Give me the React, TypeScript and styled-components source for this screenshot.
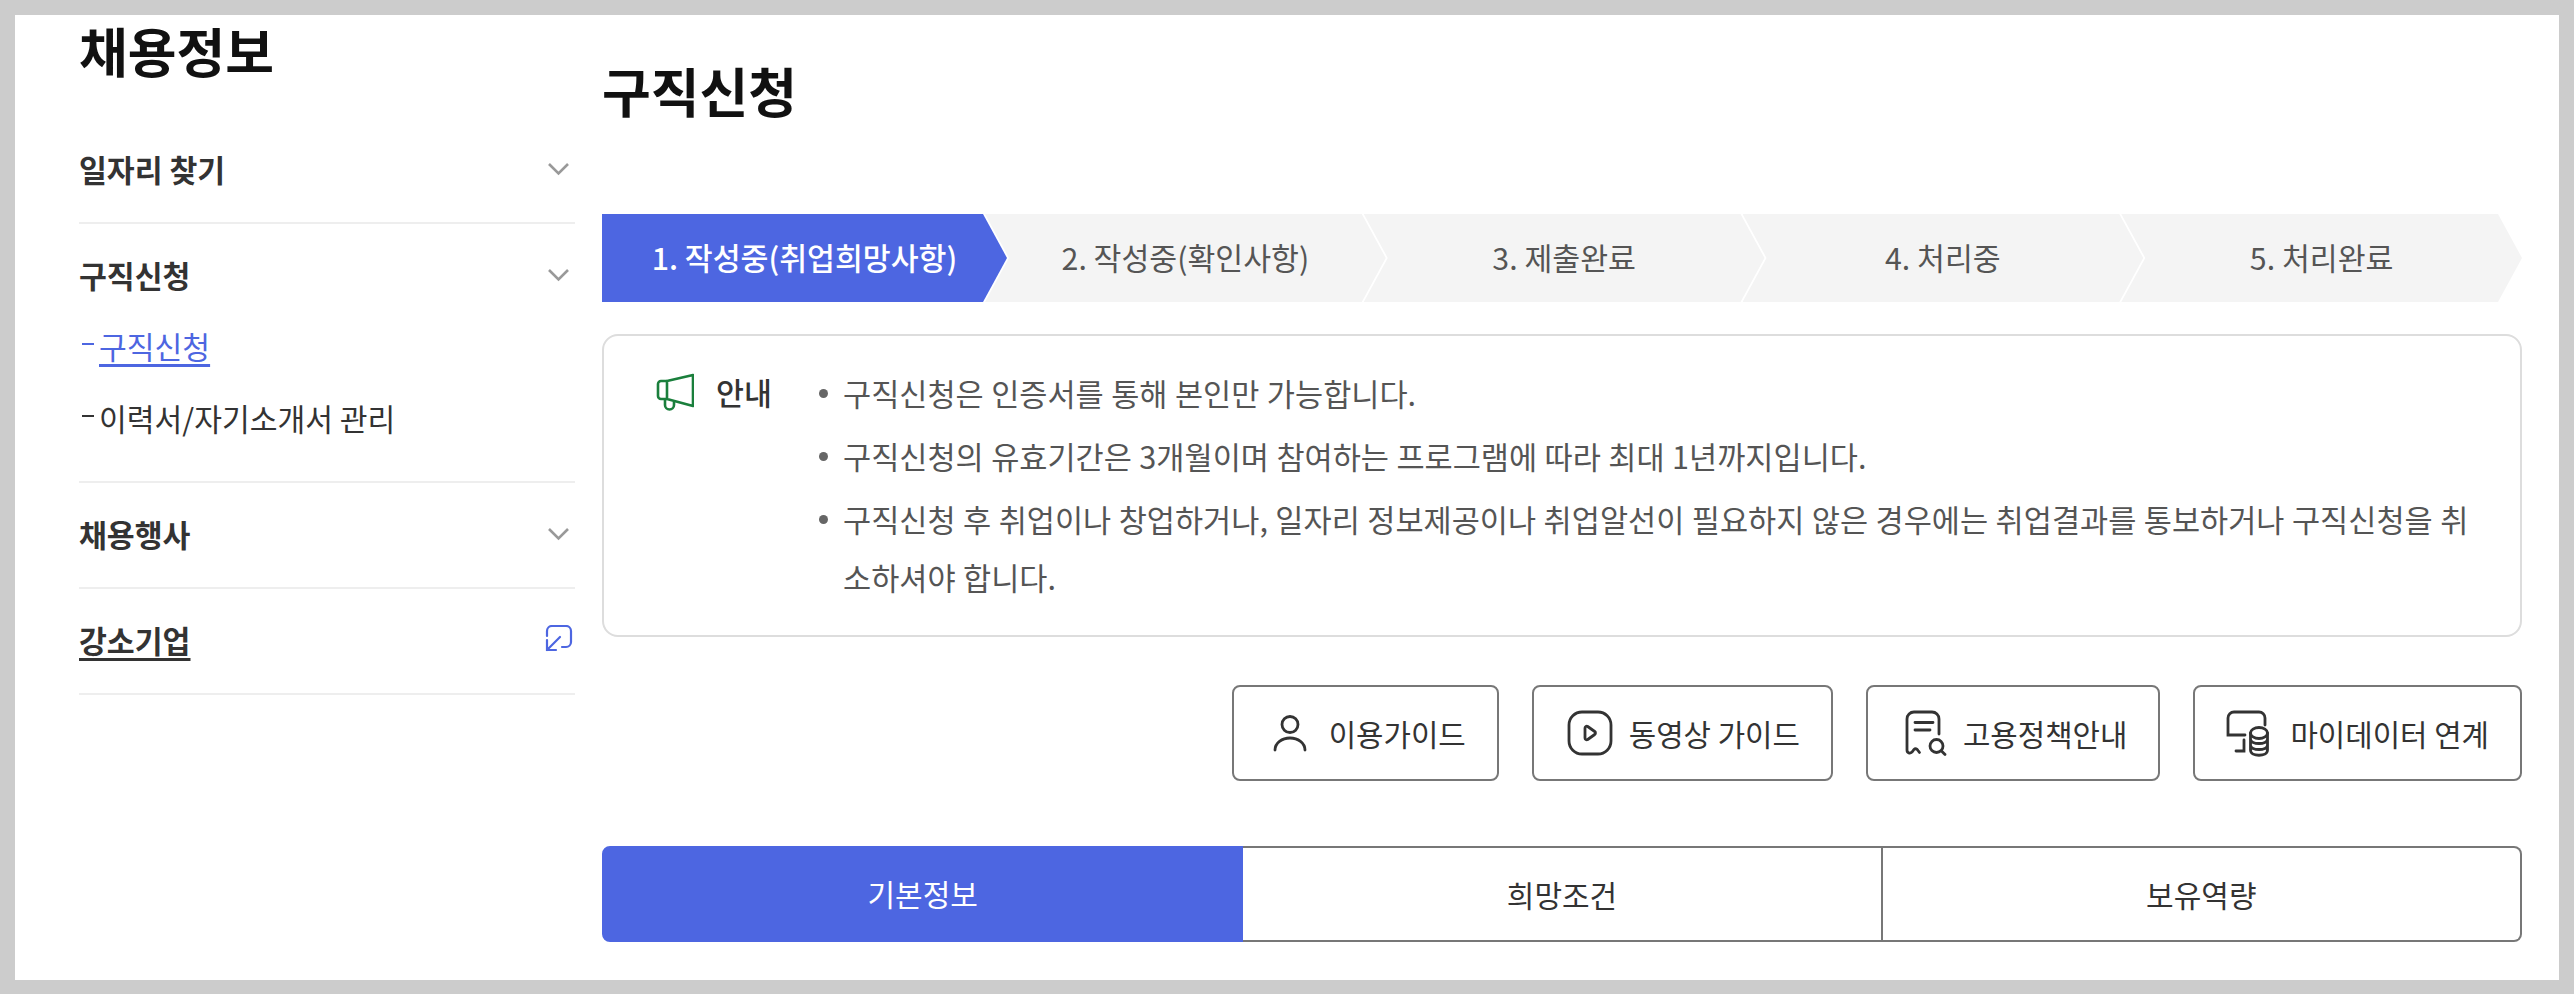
import React from "react";
import styled, { createGlobalStyle } from "styled-components";

const FONT = `"Noto Sans CJK KR", "Noto Sans", sans-serif`;
const BLUE = "#4d66e1";

const GlobalStyle = createGlobalStyle`
  html, body {
    margin: 0;
    padding: 0;
    background: #cccccc;
  }
  body {
    font-family: ${FONT};
  }
  * {
    box-sizing: border-box;
  }
`;

const Frame = styled.div`
  margin: 15px;
  height: 965px;
  background: #fff;
  display: flex;
  gap: 27px;
  padding: 0 37px 0 64px;
`;

const Sidebar = styled.aside`
  width: 496px;
  flex-shrink: 0;
`;

const SideTitle = styled.h2`
  margin: 0;
  padding-top: 4px;
  height: 103px;
  font-size: 53px;
  font-weight: 600;
  line-height: 62px;
  color: #111;
`;

const NavSection = styled.div`
  padding: 25px 0 27px;
  border-bottom: 2px solid #eeeeee;
`;

const NavHeader = styled.div`
  height: 52px;
  display: flex;
  align-items: center;
  justify-content: space-between;
`;

const NavLabel = styled.span<{ $link?: boolean }>`
  font-size: 30.3px;
  font-weight: 600;
  color: #333;
  text-decoration: ${(p) => (p.$link ? "underline" : "none")};
  text-underline-offset: 5px;
`;

const SubList = styled.ul`
  list-style: none;
  margin: 9px 0 0;
  padding: 0;
`;

const SubItem = styled.li<{ $active?: boolean }>`
  height: 72px;
  display: flex;
  align-items: center;
  font-size: 30.2px;
  color: ${(p) => (p.$active ? BLUE : "#333")};
  &::before {
    content: "";
    width: 12px;
    height: 2px;
    margin: 0 5px 4px 3px;
    background: currentColor;
  }
  a {
    color: inherit;
    text-decoration: underline;
    text-underline-offset: 5px;
  }
`;

const Main = styled.main`
  flex: 1;
  min-width: 0;
`;

const PageTitle = styled.h1`
  margin: 0;
  padding-top: 44px;
  height: 199px;
  font-size: 53px;
  font-weight: 600;
  line-height: 62px;
  color: #111;
`;

const Steps = styled.ol`
  list-style: none;
  margin: 0;
  padding: 0;
  display: flex;
  height: 88px;
`;

const Step = styled.li<{ $active?: boolean }>`
  flex: ${(p) => (p.$active ? "0 0 405px" : "1")};
  margin-left: ${(p) => (p.$active ? "0" : "-22px")};
  padding-bottom: 2px;
  display: flex;
  align-items: center;
  justify-content: center;
  background: ${(p) => (p.$active ? BLUE : "#f4f4f4")};
  color: ${(p) => (p.$active ? "#fff" : "#555")};
  font-size: 30.3px;
  font-weight: ${(p) => (p.$active ? 500 : 400)};
  clip-path: ${(p) =>
    p.$active
      ? "polygon(0 0, calc(100% - 24px) 0, 100% 50%, calc(100% - 24px) 100%, 0 100%)"
      : "polygon(0 0, calc(100% - 24px) 0, 100% 50%, calc(100% - 24px) 100%, 0 100%, 24px 50%)"};
`;

const Notice = styled.section`
  margin-top: 32px;
  height: 303px;
  border: 2px solid #dddddd;
  border-radius: 16px;
  display: flex;
  padding: 28px 50px 0 52px;
`;

const NoticeHead = styled.div`
  flex: 0 0 158px;
  height: 60px;
  margin-top: -2px;
  display: flex;
  align-items: center;
  gap: 22px;
  font-size: 30.4px;
  font-weight: 500;
  color: #333;
`;

const NoticeList = styled.ul`
  list-style: none;
  margin: 0;
  padding: 0;
  flex: 1;
`;

const NoticeItem = styled.li`
  position: relative;
  padding-left: 29px;
  margin-bottom: 5px;
  font-size: 30.6px;
  word-spacing: 0.6px;
  line-height: 58px;
  color: #555;
  &::before {
    content: "";
    position: absolute;
    left: 5px;
    top: 25px;
    width: 9px;
    height: 9px;
    border-radius: 50%;
    background: #666;
  }
`;

const GuideRow = styled.div`
  margin-top: 48px;
  display: flex;
  justify-content: flex-end;
  gap: 33px;
`;

const GuideButton = styled.button`
  height: 96px;
  padding: 0 31px 0 30px;
  display: flex;
  align-items: center;
  gap: 13px;
  background: #fff;
  border: 2px solid #777;
  border-radius: 8px;
  font-family: ${FONT};
  font-size: 29.8px;
  color: #333;
`;

const Tabs = styled.div`
  margin-top: 65px;
  display: flex;
  height: 96px;
`;

const Tab = styled.div<{ $active?: boolean }>`
  flex: 1;
  padding-bottom: ${(p) => (p.$active ? "3px" : "0")};
  display: flex;
  align-items: center;
  justify-content: center;
  font-size: 30px;
  color: ${(p) => (p.$active ? "#fff" : "#333")};
  background: ${(p) => (p.$active ? BLUE : "#fff")};
  border: 2px solid ${(p) => (p.$active ? BLUE : "#777")};
  border-left-width: 0;
  &:first-child {
    border-left-width: 2px;
    border-radius: 8px 0 0 8px;
  }
  &:last-child {
    border-radius: 0 8px 8px 0;
  }
`;

const Chevron = () => (
  <svg width="32" height="14" viewBox="0 0 32 14" fill="none">
    <path d="M6 2l9.5 9.5L25 2" stroke="#999" strokeWidth="2.6" />
  </svg>
);

const ExternalIcon = () => (
  <svg width="30" height="30" viewBox="0 0 30 30" fill="none" stroke={BLUE} strokeWidth="2.2" strokeLinecap="round">
    <path d="M2 11V6a5 5 0 0 1 5-5h14a5 5 0 0 1 5 5v11a5 5 0 0 1-5 5h-4" />
    <path d="M15 12L2 25M2 15v10h9" />
  </svg>
);

const MegaphoneIcon = () => (
  <svg width="38" height="38" viewBox="0 0 38 38" fill="none" stroke="#1a7f3c" strokeWidth="2.6" strokeLinejoin="round">
    <path d="M11 8L37 2v31l-26-7z" />
    <path d="M11 8H5a3 3 0 0 0-3 3v12a3 3 0 0 0 3 3h6" />
    <path d="M9 26v6a4.5 4.5 0 0 0 9 0v-3" />
  </svg>
);

const PersonIcon = () => (
  <svg width="52" height="52" viewBox="0 0 52 52" fill="none" stroke="#333" strokeWidth="2.8" strokeLinecap="round">
    <circle cx="26" cy="17.5" r="8" />
    <path d="M11 43c0-7 7-12 15-12s15 5 15 12" />
  </svg>
);

const VideoIcon = () => (
  <svg width="52" height="52" viewBox="0 0 52 52" fill="none" stroke="#333" strokeWidth="2.8" strokeLinejoin="round">
    <rect x="5" y="5" width="42" height="42" rx="13" />
    <path d="M21 21c0-1.500 1.500-2.200 2.700-1.500l7 5c1 .7 1 2.200 0 3l-7 5c-1.200.7-2.700 0-2.700-1.500z" />
  </svg>
);

const PolicyIcon = () => (
  <svg width="52" height="52" viewBox="0 0 52 52" fill="none" stroke="#333" strokeWidth="2.8" strokeLinecap="round">
    <path d="M41 27V12a7 7 0 0 0-7-7H16a7 7 0 0 0-7 7v31c0 3 3 4 5 2l2-2.500c1.500-1.500 3-.5 4 1l1.500 2" />
    <path d="M17 15.500h18M17 23h15" />
    <circle cx="38.500" cy="39" r="6.500" />
    <path d="M43.500 44l3.500 3.500" />
  </svg>
);

const DataIcon = () => (
  <svg width="52" height="52" viewBox="0 0 52 52" fill="none" stroke="#333" strokeWidth="2.8" strokeLinecap="round">
    <path d="M40 18V11a6 6 0 0 0-6-6H9a6 6 0 0 0-6 6v17h17" />
    <path d="M19 33v11h-8" />
    <ellipse cx="34" cy="26" rx="8.500" ry="5.500" />
    <path d="M25.500 26v17c0 7 17 7 17 0V26M25.500 32c0 6 17 6 17 0M25.500 38c0 6 17 6 17 0" />
  </svg>
);

const stepLabels = [
  "1. 작성중(취업희망사항)",
  "2. 작성중(확인사항)",
  "3. 제출완료",
  "4. 처리중",
  "5. 처리완료",
];

const notices = [
  "구직신청은 인증서를 통해 본인만 가능합니다.",
  "구직신청의 유효기간은 3개월이며 참여하는 프로그램에 따라 최대 1년까지입니다.",
  "구직신청 후 취업이나 창업하거나, 일자리 정보제공이나 취업알선이 필요하지 않은 경우에는 취업결과를 통보하거나 구직신청을 취소하셔야 합니다.",
];

const App: React.FC = () => {
  return (
    <>
      <GlobalStyle />
      <Frame>
        <Sidebar>
          <SideTitle>채용정보</SideTitle>
          <NavSection>
            <NavHeader>
              <NavLabel>일자리 찾기</NavLabel>
              <Chevron />
            </NavHeader>
          </NavSection>
          <NavSection>
            <NavHeader>
              <NavLabel>구직신청</NavLabel>
              <Chevron />
            </NavHeader>
            <SubList>
              <SubItem $active>
                <a href="#apply">구직신청</a>
              </SubItem>
              <SubItem>이력서/자기소개서 관리</SubItem>
            </SubList>
          </NavSection>
          <NavSection>
            <NavHeader>
              <NavLabel>채용행사</NavLabel>
              <Chevron />
            </NavHeader>
          </NavSection>
          <NavSection>
            <NavHeader>
              <NavLabel $link>강소기업</NavLabel>
              <ExternalIcon />
            </NavHeader>
          </NavSection>
        </Sidebar>
        <Main>
          <PageTitle>구직신청</PageTitle>
          <Steps>
            {stepLabels.map((label, index) => (
              <Step key={label} $active={index === 0}>
                {label}
              </Step>
            ))}
          </Steps>
          <Notice>
            <NoticeHead>
              <MegaphoneIcon />
              안내
            </NoticeHead>
            <NoticeList>
              {notices.map((text) => (
                <NoticeItem key={text}>{text}</NoticeItem>
              ))}
            </NoticeList>
          </Notice>
          <GuideRow>
            <GuideButton>
              <PersonIcon />
              이용가이드
            </GuideButton>
            <GuideButton>
              <VideoIcon />
              동영상 가이드
            </GuideButton>
            <GuideButton>
              <PolicyIcon />
              고용정책안내
            </GuideButton>
            <GuideButton>
              <DataIcon />
              마이데이터 연계
            </GuideButton>
          </GuideRow>
          <Tabs>
            <Tab $active>기본정보</Tab>
            <Tab>희망조건</Tab>
            <Tab>보유역량</Tab>
          </Tabs>
        </Main>
      </Frame>
    </>
  );
};

export default App;
